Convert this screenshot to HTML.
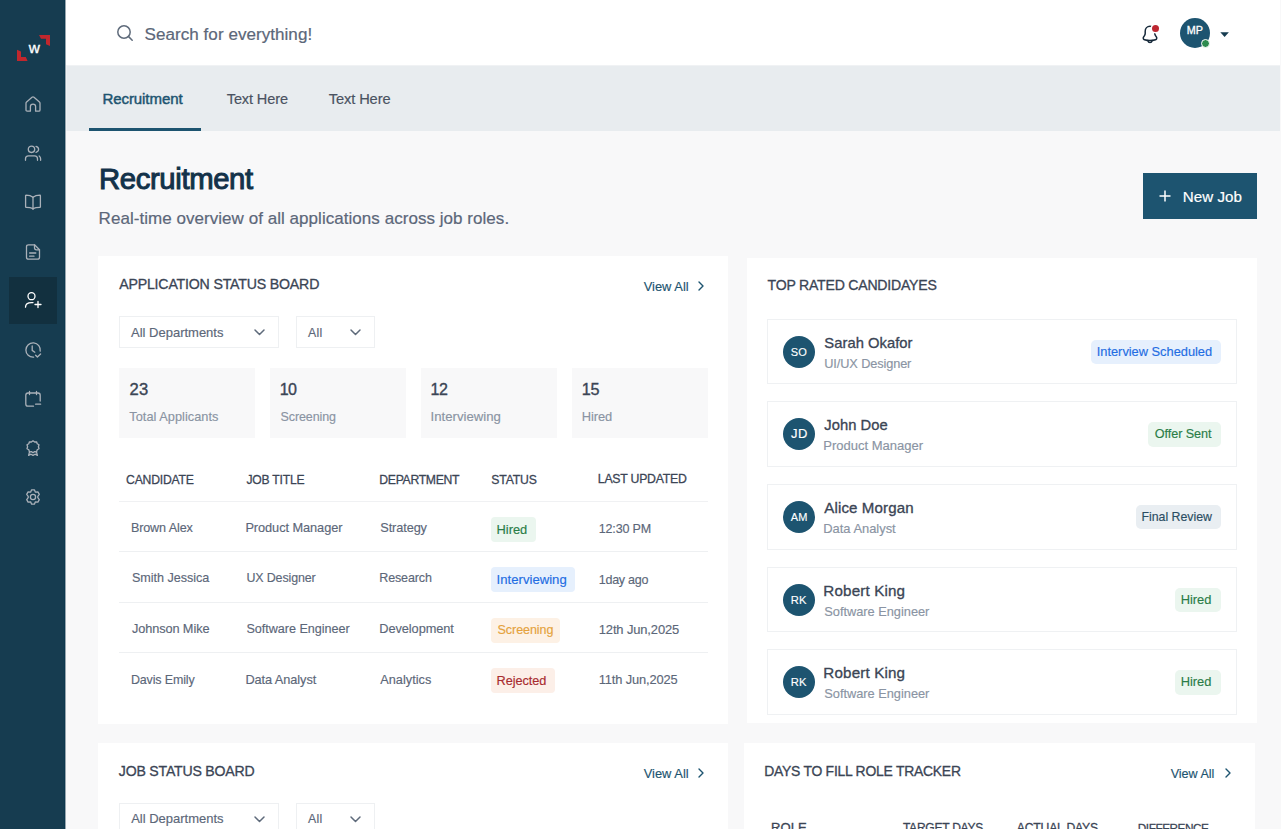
<!DOCTYPE html>
<html><head><meta charset="utf-8">
<style>
*{margin:0;padding:0;box-sizing:border-box}
html,body{width:1281px;height:829px;overflow:hidden}
body{font-family:"Liberation Sans",sans-serif;background:#f8f8f9;position:relative}
.a{position:absolute}
.t{position:absolute;white-space:nowrap;line-height:1}
svg{position:absolute;overflow:visible}
</style></head><body>
<div class="a" style="left:0;top:0;width:65px;height:829px;background:#163c50"></div>
<div class="a" style="left:64px;top:0;width:1px;height:829px;background:#0d384e"></div>
<div class="a" style="left:65px;top:0;width:1px;height:829px;background:#98a6af"></div>
<div class="a" style="left:66px;top:0;width:1214px;height:65px;background:#fff"></div>
<div class="a" style="left:66px;top:65px;width:1214px;height:66px;background:#e8ecef;box-shadow:inset 0 1px 0 #f0f2f4, inset 1px 0 0 #eff2f4"></div>
<svg style="left:0;top:0" width="65" height="70" viewBox="0 0 65 70"><path d="M39 35 L50 35 L50 46 L46 44.3 L46 38.8 L41 38.8 Z" fill="#c1272d"/><path d="M17 49.7 L21 51.6 L21 57 L25.8 57 L27.6 61 L17 61 Z" fill="#c1272d"/></svg>
<div class="a" style="left:9px;top:277px;width:48px;height:47px;background:#12303f"></div>
<svg style="left:25px;top:96px" width="16" height="16" viewBox="0 0 16 16" fill="none" stroke="#aab1b9" stroke-width="1.3" stroke-linecap="round" stroke-linejoin="round"><path d="M1 7.2 Q1 6.4 1.6 5.9 L7 1.3 Q8 0.5 9 1.3 L14.4 5.9 Q15 6.4 15 7.2 V14 Q15 15.2 13.8 15.2 H10.6 V10.6 Q10.6 8.2 8 8.2 Q5.4 8.2 5.4 10.6 V15.2 H2.2 Q1 15.2 1 14 Z"/></svg>
<svg style="left:25px;top:145px" width="16" height="16" viewBox="0 0 16 16" fill="none" stroke="#aab1b9" stroke-width="1.3" stroke-linecap="round" stroke-linejoin="round"><circle cx="6.5" cy="4.3" r="3.2"/><path d="M0.5 15.3 V13.8 Q0.5 10.8 3.5 10.8 H9.5 Q12.5 10.8 12.5 13.8 V15.3"/><path d="M11 1.3 Q13.6 2 13.6 4.3 Q13.6 6.6 11 7.3"/><path d="M14.2 11 Q15.6 12 15.6 13.8 V15.3"/></svg>
<svg style="left:25px;top:194px" width="16" height="16" viewBox="0 0 16 16" fill="none" stroke="#aab1b9" stroke-width="1.3" stroke-linecap="round" stroke-linejoin="round"><path d="M8 3.2 Q5.5 1.2 1 1.2 Q0.6 1.2 0.6 1.8 V12.8 Q0.6 13.4 1.2 13.4 Q5.5 13.4 8 14.6 Q10.5 13.4 14.8 13.4 Q15.4 13.4 15.4 12.8 V1.8 Q15.4 1.2 15 1.2 Q10.5 1.2 8 3.2 Z"/><path d="M8 3.2 V15.4"/></svg>
<svg style="left:25px;top:243.5px" width="16" height="16" viewBox="0 0 16 16" fill="none" stroke="#aab1b9" stroke-width="1.3" stroke-linecap="round" stroke-linejoin="round"><path d="M9.5 0.8 H3.5 Q1.5 0.8 1.5 2.8 V13.2 Q1.5 15.2 3.5 15.2 H12.5 Q14.5 15.2 14.5 13.2 V5.8 Z"/><path d="M9.5 0.8 V3.8 Q9.5 5.8 11.5 5.8 H14.5"/><path d="M4.6 9 H10.8"/><path d="M4.6 12.2 H9"/></svg>
<svg style="left:25px;top:292px" width="16" height="16" viewBox="0 0 16 16" fill="none" stroke="#ffffff" stroke-width="1.3" stroke-linecap="round" stroke-linejoin="round"><circle cx="6.5" cy="4.2" r="3.5"/><path d="M0.5 15.2 Q0.5 10.6 6.5 10.6 H8"/><path d="M13 9.5 V15.5 M10 12.5 H16"/></svg>
<svg style="left:25px;top:341.5px" width="16" height="16" viewBox="0 0 16 16" fill="none" stroke="#aab1b9" stroke-width="1.3" stroke-linecap="round" stroke-linejoin="round"><path d="M15.2 9.2 A7.2 7.2 0 1 0 8.6 15.2"/><path d="M7.2 4 V8.4 L9.8 10.2"/><path d="M10.6 13.2 L12.4 15 L15.6 12"/></svg>
<svg style="left:25px;top:391px" width="16" height="16" viewBox="0 0 16 16" fill="none" stroke="#aab1b9" stroke-width="1.3" stroke-linecap="round" stroke-linejoin="round"><path d="M8.5 15.2 H3 Q0.8 15.2 0.8 13 V4.2 Q0.8 2 3 2 H13 Q15.2 2 15.2 4.2 V10"/><path d="M4.5 0.4 V3.6 M11.5 0.4 V3.6"/><path d="M10.6 13.2 H15.6"/></svg>
<svg style="left:25px;top:440px" width="16" height="16" viewBox="0 0 16 16" fill="none" stroke="#aab1b9" stroke-width="1.3" stroke-linecap="round" stroke-linejoin="round"><path d="M8 0.8 L9.6 2 L11.6 1.8 L12.2 3.8 L14 4.8 L13.4 6.8 L14 8.8 L12.2 9.8 L11.6 11.8 L9.6 11.6 L8 12.8 L6.4 11.6 L4.4 11.8 L3.8 9.8 L2 8.8 L2.6 6.8 L2 4.8 L3.8 3.8 L4.4 1.8 L6.4 2 Z"/><path d="M4.6 11.6 L3.6 15.4 L6 14.2 L8 15.4 L10 14.2 L12.4 15.4 L11.4 11.6"/></svg>
<svg style="left:25px;top:489px" width="16" height="16" viewBox="0 0 16 16" fill="none" stroke="#aab1b9" stroke-width="1.3" stroke-linecap="round" stroke-linejoin="round"><path d="M6.6 0.8 H9.4 L10.4 3.2 L12.9 2.9 L14.3 5.3 L12.8 7.3 L12.8 8.7 L14.3 10.7 L12.9 13.1 L10.4 12.8 L9.4 15.2 H6.6 L5.6 12.8 L3.1 13.1 L1.7 10.7 L3.2 8.7 L3.2 7.3 L1.7 5.3 L3.1 2.9 L5.6 3.2 Z"/><circle cx="8" cy="8" r="2.6"/></svg>
<svg style="left:117px;top:25px" width="16" height="16" viewBox="0 0 16 16" fill="none" stroke="#5f6b7b" stroke-width="1.5" stroke-linecap="round"><circle cx="7" cy="7" r="6.2"/><path d="M11.6 11.6 L15.2 15.2"/></svg>
<svg style="left:1142px;top:24.5px" width="16" height="19" viewBox="0 0 16 19" fill="none" stroke="#16293a" stroke-width="1.5" stroke-linecap="round" stroke-linejoin="round"><path d="M8 1.2 C5.1 1.2 3.2 3.4 3.2 6.2 V8.6 C3.2 9.3 2.9 10.1 2.5 10.7 L1.5 12.2 C0.9 13.2 1.4 14.4 2.5 14.7 C6.1 15.8 9.9 15.8 13.5 14.7 C14.6 14.4 15.1 13.2 14.5 12.2 L13.5 10.7 C13.1 10.1 12.8 9.3 12.8 8.6 V6.2 C12.8 3.4 10.9 1.2 8 1.2 Z"/><path d="M10.2 15.6 C9.9 16.8 9 17.6 8 17.6 C7 17.6 6.1 16.8 5.8 15.6"/></svg>
<div class="a" style="left:1151.9px;top:24.8px;width:7.3px;height:7.3px;border-radius:50%;background:#bd2731;box-shadow:0 0 0 1.5px #fff"></div>
<div class="a" style="left:1180px;top:18px;width:30px;height:30px;border-radius:50%;background:#1d5470"></div>
<div class="a" style="left:1200.5px;top:38.6px;width:9.8px;height:9.8px;border-radius:50%;background:#2e8b4f;border:1.3px solid #fff"></div>
<svg style="left:1219.8px;top:31.6px" width="10" height="6" viewBox="0 0 10 6"><path d="M0.3 0.3 H8.9 L4.6 5 Z" fill="#163c50"/></svg>
<div class="a" style="left:89px;top:128px;width:112px;height:3px;background:#1d5470"></div>
<div class="a" style="left:1143px;top:173px;width:114px;height:46px;background:#1d5470"></div>
<svg style="left:1159px;top:190px" width="12" height="12" viewBox="0 0 12 12" stroke="#fff" stroke-width="1.5"><path d="M6 0.5 V11.5 M0.5 6 H11.5"/></svg>
<div class="a" style="left:98px;top:256px;width:630px;height:468px;background:#fff"></div>
<div class="a" style="left:747px;top:258px;width:510px;height:465px;background:#fff"></div>
<div class="a" style="left:98px;top:743px;width:630px;height:90px;background:#fff"></div>
<div class="a" style="left:744px;top:743px;width:511px;height:90px;background:#fff"></div>
<svg style="left:698px;top:281px" width="6" height="10" viewBox="0 0 6 10" fill="none" stroke="#1d5470" stroke-width="1.4" stroke-linecap="round" stroke-linejoin="round"><path d="M1 1 L5 5 L1 9"/></svg>
<div class="a" style="left:119px;top:316px;width:160px;height:32px;border:1px solid #eef0f2;background:#fff"></div>
<svg style="left:253.5px;top:329px" width="11" height="7" viewBox="0 0 11 7" fill="none" stroke="#5f6b7b" stroke-width="1.5" stroke-linecap="round" stroke-linejoin="round"><path d="M1 1 L5.5 5.5 L10 1"/></svg>
<div class="a" style="left:296px;top:316px;width:79px;height:32px;border:1px solid #eef0f2;background:#fff"></div>
<svg style="left:349.5px;top:329px" width="11" height="7" viewBox="0 0 11 7" fill="none" stroke="#5f6b7b" stroke-width="1.5" stroke-linecap="round" stroke-linejoin="round"><path d="M1 1 L5.5 5.5 L10 1"/></svg>
<div class="a" style="left:119px;top:368px;width:136px;height:70px;background:#f8f8f9"></div>
<div class="a" style="left:270px;top:368px;width:136px;height:70px;background:#f8f8f9"></div>
<div class="a" style="left:421px;top:368px;width:136px;height:70px;background:#f8f8f9"></div>
<div class="a" style="left:572px;top:368px;width:136px;height:70px;background:#f8f8f9"></div>
<div class="a" style="left:119px;top:501px;width:589px;height:1px;background:#f0f1f3"></div>
<div class="a" style="left:119px;top:551px;width:589px;height:1px;background:#eef0f2"></div>
<div class="a" style="left:119px;top:602px;width:589px;height:1px;background:#eef0f2"></div>
<div class="a" style="left:119px;top:652px;width:589px;height:1px;background:#eef0f2"></div>
<div class="a" style="left:767px;top:318.6px;width:470px;height:65.6px;border:1px solid #eff1f3"></div>
<div class="a" style="left:783px;top:335.6px;width:32px;height:32px;border-radius:50%;background:#1d5470"></div>
<div class="a" style="left:767px;top:401.3px;width:470px;height:65.6px;border:1px solid #eff1f3"></div>
<div class="a" style="left:783px;top:418.3px;width:32px;height:32px;border-radius:50%;background:#1d5470"></div>
<div class="a" style="left:767px;top:484.0px;width:470px;height:65.6px;border:1px solid #eff1f3"></div>
<div class="a" style="left:783px;top:501.0px;width:32px;height:32px;border-radius:50%;background:#1d5470"></div>
<div class="a" style="left:767px;top:566.7px;width:470px;height:65.6px;border:1px solid #eff1f3"></div>
<div class="a" style="left:783px;top:583.7px;width:32px;height:32px;border-radius:50%;background:#1d5470"></div>
<div class="a" style="left:767px;top:649.4px;width:470px;height:65.6px;border:1px solid #eff1f3"></div>
<div class="a" style="left:783px;top:666.4px;width:32px;height:32px;border-radius:50%;background:#1d5470"></div>
<svg style="left:698px;top:768px" width="6" height="10" viewBox="0 0 6 10" fill="none" stroke="#1d5470" stroke-width="1.4" stroke-linecap="round" stroke-linejoin="round"><path d="M1 1 L5 5 L1 9"/></svg>
<div class="a" style="left:119px;top:803px;width:160px;height:32px;border:1px solid #eef0f2;background:#fff"></div>
<svg style="left:253.5px;top:816px" width="11" height="7" viewBox="0 0 11 7" fill="none" stroke="#5f6b7b" stroke-width="1.5" stroke-linecap="round" stroke-linejoin="round"><path d="M1 1 L5.5 5.5 L10 1"/></svg>
<div class="a" style="left:296px;top:803px;width:79px;height:32px;border:1px solid #eef0f2;background:#fff"></div>
<svg style="left:349.5px;top:816px" width="11" height="7" viewBox="0 0 11 7" fill="none" stroke="#5f6b7b" stroke-width="1.5" stroke-linecap="round" stroke-linejoin="round"><path d="M1 1 L5.5 5.5 L10 1"/></svg>
<svg style="left:1224.5px;top:768px" width="6" height="10" viewBox="0 0 6 10" fill="none" stroke="#1d5470" stroke-width="1.4" stroke-linecap="round" stroke-linejoin="round"><path d="M1 1 L5 5 L1 9"/></svg>
<div class="a" style="left:491px;top:516.6px;width:45px;height:25px;border-radius:4px;background:#ebf6ef"></div>
<div class="a" style="left:491px;top:567.1px;width:84px;height:25px;border-radius:4px;background:#e6f0fd"></div>
<div class="a" style="left:491px;top:617.6px;width:69px;height:25px;border-radius:4px;background:#fdf1e5"></div>
<div class="a" style="left:491px;top:668.1px;width:63.5px;height:25px;border-radius:4px;background:#fcefe8"></div>
<div class="a" style="left:1091.4px;top:339.5px;width:129.2px;height:24.5px;border-radius:5px;background:#e6f0fd"></div>
<div class="a" style="left:1148.4px;top:422.1px;width:72.2px;height:24.5px;border-radius:5px;background:#ebf6ef"></div>
<div class="a" style="left:1136px;top:504.8px;width:84.6px;height:24.5px;border-radius:5px;background:#e9eef2"></div>
<div class="a" style="left:1175px;top:587.5px;width:45.6px;height:24.5px;border-radius:5px;background:#ebf6ef"></div>
<div class="a" style="left:1175px;top:670.1px;width:45.6px;height:24.5px;border-radius:5px;background:#ebf6ef"></div>
<div class="t" style="left:28.77px;top:40.00px;font-size:15.4px;font-weight:400;color:#fff;-webkit-text-stroke:0.34px #fff">w</div>
<div class="t" style="left:144.60px;top:26.00px;font-size:17.06px;font-weight:400;color:#5c6779;-webkit-text-stroke:0.2px #5c6779;letter-spacing:0.037px">Search for everything!</div>
<div class="t" style="left:102.42px;top:91.00px;font-size:15.04px;font-weight:400;color:#1d5470;-webkit-text-stroke:0.45px #1d5470;letter-spacing:-0.080px">Recruitment</div>
<div class="t" style="left:226.78px;top:92.00px;font-size:14.54px;font-weight:400;color:#4a5261;-webkit-text-stroke:0.17px #4a5261;letter-spacing:-0.122px">Text Here</div>
<div class="t" style="left:328.79px;top:92.00px;font-size:14.65px;font-weight:400;color:#4a5261;-webkit-text-stroke:0.18px #4a5261;letter-spacing:-0.110px">Text Here</div>
<div class="t" style="left:1186.66px;top:25.00px;font-size:10.77px;font-weight:400;color:#fff;-webkit-text-stroke:0.32px #fff;letter-spacing:0.109px">MP</div>
<div class="t" style="left:99.01px;top:164.00px;font-size:29.28px;font-weight:400;color:#13324a;-webkit-text-stroke:1.02px #13324a;letter-spacing:-0.365px">Recruitment</div>
<div class="t" style="left:98.60px;top:210.00px;font-size:17.01px;font-weight:400;color:#5c6779;-webkit-text-stroke:0.2px #5c6779;letter-spacing:0.043px">Real-time overview of all applications across job roles.</div>
<div class="t" style="left:1182.69px;top:189.00px;font-size:15.17px;font-weight:400;color:#fff;-webkit-text-stroke:0.18px #fff;letter-spacing:0.047px">New Job</div>
<div class="t" style="left:119.16px;top:277.00px;font-size:14.16px;font-weight:400;color:#3b4555;-webkit-text-stroke:0.31px #3b4555;letter-spacing:-0.187px">APPLICATION STATUS BOARD</div>
<div class="t" style="left:643.68px;top:281.00px;font-size:12.88px;font-weight:400;color:#1d5470;-webkit-text-stroke:0.15px #1d5470;letter-spacing:0.021px">View All</div>
<div class="t" style="left:131.08px;top:326.00px;font-size:13px;font-weight:400;color:#5c6779;-webkit-text-stroke:0.16px #5c6779;letter-spacing:-0.010px">All Departments</div>
<div class="t" style="left:307.88px;top:327.00px;font-size:12.33px;font-weight:400;color:#5c6779;-webkit-text-stroke:0.15px #5c6779;letter-spacing:0.345px">All</div>
<div class="t" style="left:129.38px;top:382.00px;font-size:16.6px;font-weight:400;color:#3b4555;-webkit-text-stroke:0.37px #3b4555;letter-spacing:0.406px">23</div>
<div class="t" style="left:129.27px;top:411.00px;font-size:12.76px;font-weight:400;color:#8a94a3;-webkit-text-stroke:0.15px #8a94a3;letter-spacing:0.035px">Total Applicants</div>
<div class="t" style="left:279.68px;top:381.00px;font-size:16.05px;font-weight:400;color:#3b4555;-webkit-text-stroke:0.35px #3b4555;letter-spacing:-0.469px">10</div>
<div class="t" style="left:280.57px;top:411.00px;font-size:12.5px;font-weight:400;color:#8a94a3;-webkit-text-stroke:0.15px #8a94a3;letter-spacing:-0.098px">Screening</div>
<div class="t" style="left:430.57px;top:382.00px;font-size:16px;font-weight:400;color:#3b4555;-webkit-text-stroke:0.35px #3b4555;letter-spacing:-0.550px">12</div>
<div class="t" style="left:430.48px;top:410.00px;font-size:13.18px;font-weight:400;color:#8a94a3;-webkit-text-stroke:0.16px #8a94a3;letter-spacing:0.017px">Interviewing</div>
<div class="t" style="left:581.78px;top:381.00px;font-size:16.24px;font-weight:400;color:#3b4555;-webkit-text-stroke:0.36px #3b4555;letter-spacing:-0.186px">15</div>
<div class="t" style="left:581.68px;top:411.00px;font-size:12.88px;font-weight:400;color:#8a94a3;-webkit-text-stroke:0.15px #8a94a3;letter-spacing:-0.040px">Hired</div>
<div class="t" style="left:126.04px;top:474.00px;font-size:12.2px;font-weight:400;color:#3b4555;-webkit-text-stroke:0.27px #3b4555;letter-spacing:-0.207px">CANDIDATE</div>
<div class="t" style="left:246.44px;top:474.00px;font-size:12.13px;font-weight:400;color:#3b4555;-webkit-text-stroke:0.27px #3b4555;letter-spacing:-0.205px">JOB TITLE</div>
<div class="t" style="left:379.33px;top:474.00px;font-size:12.23px;font-weight:400;color:#3b4555;-webkit-text-stroke:0.27px #3b4555;letter-spacing:-0.317px">DEPARTMENT</div>
<div class="t" style="left:491.33px;top:474.00px;font-size:12.23px;font-weight:400;color:#3b4555;-webkit-text-stroke:0.27px #3b4555;letter-spacing:-0.181px">STATUS</div>
<div class="t" style="left:597.84px;top:473.00px;font-size:12.31px;font-weight:400;color:#3b4555;-webkit-text-stroke:0.27px #3b4555;letter-spacing:-0.255px">LAST UPDATED</div>
<div class="t" style="left:130.88px;top:522.00px;font-size:12.6px;font-weight:400;color:#5c6779;-webkit-text-stroke:0.15px #5c6779;letter-spacing:-0.117px">Brown Alex</div>
<div class="t" style="left:245.38px;top:522.00px;font-size:12.79px;font-weight:400;color:#5c6779;-webkit-text-stroke:0.15px #5c6779;letter-spacing:-0.067px">Product Manager</div>
<div class="t" style="left:380.27px;top:522.00px;font-size:12.75px;font-weight:400;color:#5c6779;-webkit-text-stroke:0.15px #5c6779;letter-spacing:-0.109px">Strategy</div>
<div class="t" style="left:496.57px;top:524.00px;font-size:12.88px;font-weight:400;color:#2a7d47;-webkit-text-stroke:0.15px #2a7d47;letter-spacing:-0.040px">Hired</div>
<div class="t" style="left:598.78px;top:523.00px;font-size:12.54px;font-weight:400;color:#5c6779;-webkit-text-stroke:0.15px #5c6779;letter-spacing:-0.178px">12:30 PM</div>
<div class="t" style="left:131.88px;top:572.00px;font-size:12.6px;font-weight:400;color:#5c6779;-webkit-text-stroke:0.15px #5c6779;letter-spacing:-0.028px">Smith Jessica</div>
<div class="t" style="left:246.38px;top:572.00px;font-size:12.44px;font-weight:400;color:#5c6779;-webkit-text-stroke:0.15px #5c6779;letter-spacing:-0.122px">UX Designer</div>
<div class="t" style="left:379.27px;top:572.00px;font-size:12.53px;font-weight:400;color:#5c6779;-webkit-text-stroke:0.15px #5c6779;letter-spacing:-0.136px">Research</div>
<div class="t" style="left:496.58px;top:573.00px;font-size:13.13px;font-weight:400;color:#1f6de3;-webkit-text-stroke:0.16px #1f6de3;letter-spacing:0.010px">Interviewing</div>
<div class="t" style="left:598.78px;top:574.00px;font-size:12.54px;font-weight:400;color:#5c6779;-webkit-text-stroke:0.15px #5c6779;letter-spacing:-0.278px">1day ago</div>
<div class="t" style="left:131.88px;top:623.00px;font-size:12.75px;font-weight:400;color:#5c6779;-webkit-text-stroke:0.15px #5c6779;letter-spacing:-0.094px">Johnson Mike</div>
<div class="t" style="left:246.38px;top:623.00px;font-size:12.62px;font-weight:400;color:#5c6779;-webkit-text-stroke:0.15px #5c6779;letter-spacing:-0.024px">Software Engineer</div>
<div class="t" style="left:379.27px;top:623.00px;font-size:12.79px;font-weight:400;color:#5c6779;-webkit-text-stroke:0.15px #5c6779;letter-spacing:-0.071px">Development</div>
<div class="t" style="left:497.57px;top:624.00px;font-size:12.55px;font-weight:400;color:#e5a23c;-webkit-text-stroke:0.15px #e5a23c;letter-spacing:-0.084px">Screening</div>
<div class="t" style="left:598.78px;top:624.00px;font-size:12.96px;font-weight:400;color:#5c6779;-webkit-text-stroke:0.16px #5c6779;letter-spacing:-0.138px">12th Jun,2025</div>
<div class="t" style="left:130.88px;top:674.00px;font-size:12.46px;font-weight:400;color:#5c6779;-webkit-text-stroke:0.15px #5c6779;letter-spacing:-0.126px">Davis Emily</div>
<div class="t" style="left:245.38px;top:674.00px;font-size:12.77px;font-weight:400;color:#5c6779;-webkit-text-stroke:0.15px #5c6779;letter-spacing:-0.071px">Data Analyst</div>
<div class="t" style="left:380.27px;top:674.00px;font-size:12.71px;font-weight:400;color:#5c6779;-webkit-text-stroke:0.15px #5c6779;letter-spacing:0.021px">Analytics</div>
<div class="t" style="left:496.57px;top:675.00px;font-size:12.73px;font-weight:400;color:#a82b2f;-webkit-text-stroke:0.15px #a82b2f;letter-spacing:-0.054px">Rejected</div>
<div class="t" style="left:598.78px;top:674.00px;font-size:12.87px;font-weight:400;color:#5c6779;-webkit-text-stroke:0.15px #5c6779;letter-spacing:-0.147px">11th Jun,2025</div>
<div class="t" style="left:767.55px;top:278.00px;font-size:14.08px;font-weight:400;color:#3b4555;-webkit-text-stroke:0.31px #3b4555;letter-spacing:-0.220px">TOP RATED CANDIDAYES</div>
<div class="t" style="left:790.87px;top:347.00px;font-size:11.02px;font-weight:400;color:#fff;-webkit-text-stroke:0.13px #fff;letter-spacing:-0.080px">SO</div>
<div class="t" style="left:824.36px;top:336.00px;font-size:14.77px;font-weight:400;color:#3b4555;-webkit-text-stroke:0.32px #3b4555;letter-spacing:0.025px">Sarah Okafor</div>
<div class="t" style="left:824.28px;top:358.00px;font-size:12.75px;font-weight:400;color:#8a94a3;-webkit-text-stroke:0.15px #8a94a3;letter-spacing:-0.114px">UI/UX Designer</div>
<div class="t" style="left:1096.78px;top:346.00px;font-size:12.86px;font-weight:400;color:#1f6de3;-webkit-text-stroke:0.15px #1f6de3;letter-spacing:-0.023px">Interview Scheduled</div>
<div class="t" style="left:790.88px;top:427.00px;font-size:12.99px;font-weight:400;color:#fff;-webkit-text-stroke:0.16px #fff;letter-spacing:0.752px">JD</div>
<div class="t" style="left:824.36px;top:418.00px;font-size:14.76px;font-weight:400;color:#3b4555;-webkit-text-stroke:0.32px #3b4555;letter-spacing:0.034px">John Doe</div>
<div class="t" style="left:823.28px;top:439.00px;font-size:13.02px;font-weight:400;color:#8a94a3;-webkit-text-stroke:0.16px #8a94a3">Product Manager</div>
<div class="t" style="left:1154.78px;top:428.00px;font-size:12.62px;font-weight:400;color:#2a7d47;-webkit-text-stroke:0.15px #2a7d47;letter-spacing:-0.054px">Offer Sent</div>
<div class="t" style="left:790.87px;top:512.00px;font-size:11.02px;font-weight:400;color:#fff;-webkit-text-stroke:0.13px #fff;letter-spacing:-0.080px">AM</div>
<div class="t" style="left:824.37px;top:500.00px;font-size:15.07px;font-weight:400;color:#3b4555;-webkit-text-stroke:0.33px #3b4555;letter-spacing:0.113px">Alice Morgan</div>
<div class="t" style="left:823.28px;top:523.00px;font-size:12.93px;font-weight:400;color:#8a94a3;-webkit-text-stroke:0.16px #8a94a3;letter-spacing:-0.011px">Data Analyst</div>
<div class="t" style="left:1141.48px;top:511.00px;font-size:12.35px;font-weight:400;color:#2b4d63;-webkit-text-stroke:0.15px #2b4d63;letter-spacing:-0.017px">Final Review</div>
<div class="t" style="left:790.87px;top:595.00px;font-size:11.25px;font-weight:400;color:#fff;-webkit-text-stroke:0.14px #fff;letter-spacing:0.141px">RK</div>
<div class="t" style="left:823.37px;top:583.00px;font-size:15.19px;font-weight:400;color:#3b4555;-webkit-text-stroke:0.33px #3b4555;letter-spacing:0.141px">Robert King</div>
<div class="t" style="left:824.28px;top:606.00px;font-size:12.83px;font-weight:400;color:#8a94a3;-webkit-text-stroke:0.15px #8a94a3;letter-spacing:-0.026px">Software Engineer</div>
<div class="t" style="left:1180.78px;top:594.00px;font-size:12.88px;font-weight:400;color:#2a7d47;-webkit-text-stroke:0.15px #2a7d47;letter-spacing:-0.040px">Hired</div>
<div class="t" style="left:790.87px;top:677.00px;font-size:11.25px;font-weight:400;color:#fff;-webkit-text-stroke:0.14px #fff;letter-spacing:0.141px">RK</div>
<div class="t" style="left:823.37px;top:665.00px;font-size:15.19px;font-weight:400;color:#3b4555;-webkit-text-stroke:0.33px #3b4555;letter-spacing:0.141px">Robert King</div>
<div class="t" style="left:824.28px;top:688.00px;font-size:12.83px;font-weight:400;color:#8a94a3;-webkit-text-stroke:0.15px #8a94a3;letter-spacing:-0.026px">Software Engineer</div>
<div class="t" style="left:1180.78px;top:676.00px;font-size:12.88px;font-weight:400;color:#2a7d47;-webkit-text-stroke:0.15px #2a7d47;letter-spacing:-0.040px">Hired</div>
<div class="t" style="left:118.86px;top:764.00px;font-size:14.1px;font-weight:400;color:#3b4555;-webkit-text-stroke:0.31px #3b4555;letter-spacing:-0.206px">JOB STATUS BOARD</div>
<div class="t" style="left:643.68px;top:768.00px;font-size:12.88px;font-weight:400;color:#1d5470;-webkit-text-stroke:0.15px #1d5470;letter-spacing:0.021px">View All</div>
<div class="t" style="left:131.18px;top:812.00px;font-size:13px;font-weight:400;color:#5c6779;-webkit-text-stroke:0.16px #5c6779;letter-spacing:-0.010px">All Departments</div>
<div class="t" style="left:307.88px;top:813.00px;font-size:12.33px;font-weight:400;color:#5c6779;-webkit-text-stroke:0.15px #5c6779;letter-spacing:0.345px">All</div>
<div class="t" style="left:764.15px;top:765.00px;font-size:13.93px;font-weight:400;color:#3b4555;-webkit-text-stroke:0.31px #3b4555;letter-spacing:-0.245px">DAYS TO FILL ROLE TRACKER</div>
<div class="t" style="left:1170.67px;top:768.00px;font-size:12.59px;font-weight:400;color:#1d5470;-webkit-text-stroke:0.15px #1d5470;letter-spacing:-0.009px">View All</div>
<div class="t" style="left:771.04px;top:821.00px;font-size:13.08px;font-weight:400;color:#3b4555;-webkit-text-stroke:0.29px #3b4555">ROLE</div>
<div class="t" style="left:902.93px;top:822.00px;font-size:12.06px;font-weight:400;color:#3b4555;-webkit-text-stroke:0.27px #3b4555;letter-spacing:-0.265px">TARGET DAYS</div>
<div class="t" style="left:1016.74px;top:822.00px;font-size:12.22px;font-weight:400;color:#3b4555;-webkit-text-stroke:0.27px #3b4555;letter-spacing:-0.209px">ACTUAL DAYS</div>
<div class="t" style="left:1137.83px;top:823.00px;font-size:11.8px;font-weight:400;color:#3b4555;-webkit-text-stroke:0.26px #3b4555;letter-spacing:-0.474px">DIFFERENCE</div>
</body></html>
